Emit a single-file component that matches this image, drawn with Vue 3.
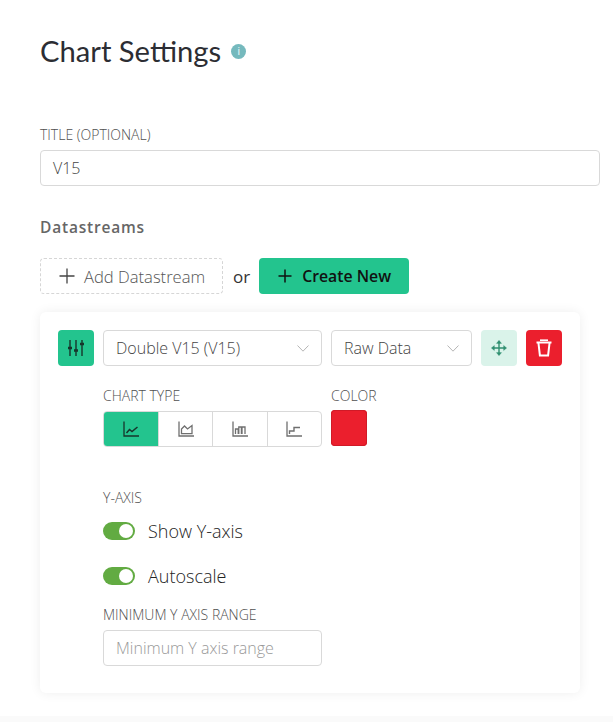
<script setup>
const chartTypes = [
  { key: 'line', active: true },
  { key: 'area', active: false },
  { key: 'bar', active: false },
  { key: 'step', active: false }
]
const toggles = ['Show Y-axis', 'Autoscale']
</script>

<template>
  <div class="page">
    <div class="heading">
      <h1>Chart Settings</h1>
      <span class="info">i</span>
    </div>

    <label class="label title-label">TITLE (OPTIONAL)</label>
    <div class="field title-field">V15</div>

    <h2>Datastreams</h2>

    <div class="actions">
      <button class="add">
        <svg width="16" height="16" viewBox="0 0 16 16"><path d="M8 0.5V15.5M0.5 8H15.5" stroke="#444" stroke-width="1.3" fill="none" /></svg>
        <span>Add Datastream</span>
      </button>
      <span class="or">or</span>
      <button class="create">
        <svg width="14" height="14" viewBox="0 0 14 14"><path d="M7 0.5V13.5M0.5 7H13.5" stroke="#111" stroke-width="1.5" fill="none" /></svg>
        <span>Create New</span>
      </button>
    </div>

    <div class="card">
      <div class="row">
        <div class="square green">
          <svg width="18" height="18" viewBox="0 0 18 18" fill="none" stroke="#17352b" stroke-width="1.4">
            <path d="M3 1V17M9 1V17M15 1V17" />
            <path d="M1 9H5M7 11.5H11M13 5H17" stroke-width="2.6" />
          </svg>
        </div>
        <div class="field select wide">
          <span>Double V15 (V15)</span>
          <svg class="chev" width="12" height="7" viewBox="0 0 12 7"><path d="M0.5 0.5L6 6.2L11.5 0.5" fill="none" stroke="#b5b5b5" /></svg>
        </div>
        <div class="field select narrow">
          <span>Raw Data</span>
          <svg class="chev" width="12" height="7" viewBox="0 0 12 7"><path d="M0.5 0.5L6 6.2L11.5 0.5" fill="none" stroke="#b5b5b5" /></svg>
        </div>
        <div class="square mint">
          <svg width="16" height="16" viewBox="0 0 16 16" fill="#2f8f70" stroke="#2f8f70" stroke-width="1.4">
            <path d="M8 2V14M2 8H14" fill="none" />
            <path d="M8 0.3L10.6 3.4H5.4ZM8 15.7L10.6 12.6H5.4ZM0.3 8L3.4 5.4V10.6ZM15.7 8L12.6 5.4V10.6Z" stroke-width="0.3" />
          </svg>
        </div>
        <div class="square red">
          <svg width="16" height="18" viewBox="0 0 16 18" fill="none" stroke="#fff" stroke-width="2">
            <path d="M0.5 3.5H15.5" />
            <path d="M4 1.2H12" stroke-width="1.6" />
            <path d="M2.4 3.5L3.9 16.4H12.1L13.6 3.5" />
          </svg>
        </div>
      </div>

      <div class="chart-row">
        <div class="type-col">
          <div class="label">CHART TYPE</div>
          <div class="types">
            <div v-for="t in chartTypes" :key="t.key" class="type" :class="{ active: t.active }">
              <svg width="16" height="16" viewBox="0 0 16 16" fill="none" :stroke="t.active ? '#17352b' : '#6f6f6f'" stroke-width="1.3">
                <path d="M1 0.5V15H16" />
                <path v-if="t.key === 'line'" d="M3.5 12L6.5 8.5L9 10.5L14.5 6" stroke-width="1.5" />
                <path v-if="t.key === 'area'" d="M3.5 12.6V8L6.5 5L9.5 8L14 4.5V12.6Z" />
                <path v-if="t.key === 'bar'" d="M3.5 13V8H6.2V13M6.8 13V6H9.4V13M10 13V6H13V13" />
                <path v-if="t.key === 'step'" d="M3.5 13V10H8V6.5H14" stroke-width="1.4" />
              </svg>
            </div>
          </div>
        </div>
        <div class="color-col">
          <div class="label">COLOR</div>
          <div class="swatch"></div>
        </div>
      </div>

      <div class="settings">
        <div class="label axis-label">Y-AXIS</div>
        <div class="toggles">
          <div v-for="name in toggles" :key="name" class="toggle-row">
            <span class="toggle"><span class="knob"></span></span>
            <span class="toggle-text">{{ name }}</span>
          </div>
        </div>
        <div class="label range-label">MINIMUM Y AXIS RANGE</div>
        <div class="field range">Minimum Y axis range</div>
      </div>
    </div>
    <div class="footer"></div>
  </div>
</template>

<style scoped>
.page {
  width: 613px;
  height: 722px;
  box-sizing: border-box;
  padding: 0 13px 0 40px;
  position: relative;
  overflow: hidden;
  font-family: "Open Sans", "Noto Sans", sans-serif;
  color: #555;
  background: #fff;
}
.heading {
  display: flex;
  align-items: center;
  height: 34px;
  padding-top: 34px;
  gap: 10px;
}
h1 {
  margin: 0;
  padding-bottom: 2px;
  font-family: Lato, sans-serif;
  font-size: 29.2px;
  font-weight: 400;
  color: #2c2d33;
}
.info {
  width: 15px;
  height: 15px;
  border-radius: 50%;
  background: #75b9bd;
  color: #fff;
  font-size: 10px;
  line-height: 15px;
  text-align: center;
}
.label {
  font-size: 14px;
  font-weight: 300;
  color: #4f4f4f;
  line-height: 16px;
  height: 16px;
}
.title-label {
  display: block;
  margin-top: 59px;
}
.field {
  box-sizing: border-box;
  height: 36px;
  border: 1px solid #d9d9d9;
  border-radius: 4px;
  padding: 0 12px;
  display: flex;
  align-items: center;
  font-size: 16px;
  font-weight: 300;
  color: #444;
  background: #fff;
}
.title-field {
  margin-top: 7px;
}
h2 {
  margin: 32px 0 0;
  font-size: 15.5px;
  line-height: 18px;
  font-weight: 600;
  color: #666;
  letter-spacing: 0.8px;
}
.actions {
  display: flex;
  align-items: center;
  margin-top: 22px;
  height: 36px;
}
button {
  height: 36px;
  border-radius: 4px;
  display: flex;
  align-items: center;
  box-sizing: border-box;
  font-family: inherit;
  font-size: 16.6px;
  padding: 0;
}
.add {
  width: 183px;
  border: 1px dashed #d6d6d6;
  background: #fff;
  color: #555;
  font-weight: 300;
  padding-left: 18px;
  gap: 9px;
}
.or {
  margin: 0 9px 0 10px;
  font-size: 17px;
  color: #333;
}
.create {
  width: 150px;
  border: 0;
  background: #23c48e;
  color: #111;
  font-size: 15.8px;
  font-weight: 600;
  padding-left: 19px;
  gap: 10px;
}
.card {
  margin-top: 18px;
  width: 540px;
  height: 381px;
  box-sizing: border-box;
  padding: 18px;
  border-radius: 6px;
  background: #fff;
  box-shadow: 0 0 12px rgba(0, 0, 0, 0.07);
}
.row {
  display: flex;
  gap: 9px;
}
.square {
  width: 36px;
  height: 36px;
  border-radius: 4px;
  display: flex;
  align-items: center;
  justify-content: center;
  flex: none;
}
.green { background: #23c48e; }
.mint { background: #daf3ea; }
.red { background: #eb1f2d; }
.select {
  justify-content: space-between;
  padding-right: 12px;
}
.wide { width: 219px; }
.narrow { width: 141px; }
.chart-row {
  display: flex;
  gap: 9px;
  margin: 22px 0 0 45px;
}
.type-col { width: 219px; }
.types {
  box-sizing: border-box;
  display: flex;
  height: 36px;
  margin-top: 7px;
  border: 1px solid #d9d9d9;
  border-radius: 4px;
  overflow: hidden;
}
.type {
  flex: 1;
  display: flex;
  align-items: center;
  justify-content: center;
  border-left: 1px solid #d9d9d9;
}
.type:first-child { border-left: 0; }
.type.active {
  background: #23c48e;
  flex: 0 0 55px;
  margin: -1px 0 -1px -1px;
}
.swatch {
  width: 36px;
  height: 36px;
  margin-top: 6px;
  border-radius: 4px;
  background: #eb1f2d;
  box-shadow: inset 0 0 0 1px #d01a27;
}
.settings { margin-left: 45px; }
.axis-label { margin-top: 43px; }
.toggles {
  display: flex;
  flex-direction: column;
  gap: 27px;
  margin-top: 16px;
}
.toggle-row {
  display: flex;
  align-items: center;
  height: 18px;
}
.toggle {
  width: 32px;
  height: 18px;
  border-radius: 9px;
  background: #62ab42;
  position: relative;
  flex: none;
}
.knob {
  position: absolute;
  right: 2px;
  top: 2px;
  width: 14px;
  height: 14px;
  border-radius: 50%;
  background: #fff;
}
.toggle-text {
  margin-left: 13px;
  font-size: 18px;
  font-weight: 300;
  color: #222;
}
.range-label { margin-top: 22px; }
.range {
  width: 219px;
  margin-top: 7px;
  color: #999;
}
.footer {
  position: absolute;
  left: 0;
  right: 0;
  bottom: 0;
  height: 6px;
  background: #fafafa;
}
</style>
